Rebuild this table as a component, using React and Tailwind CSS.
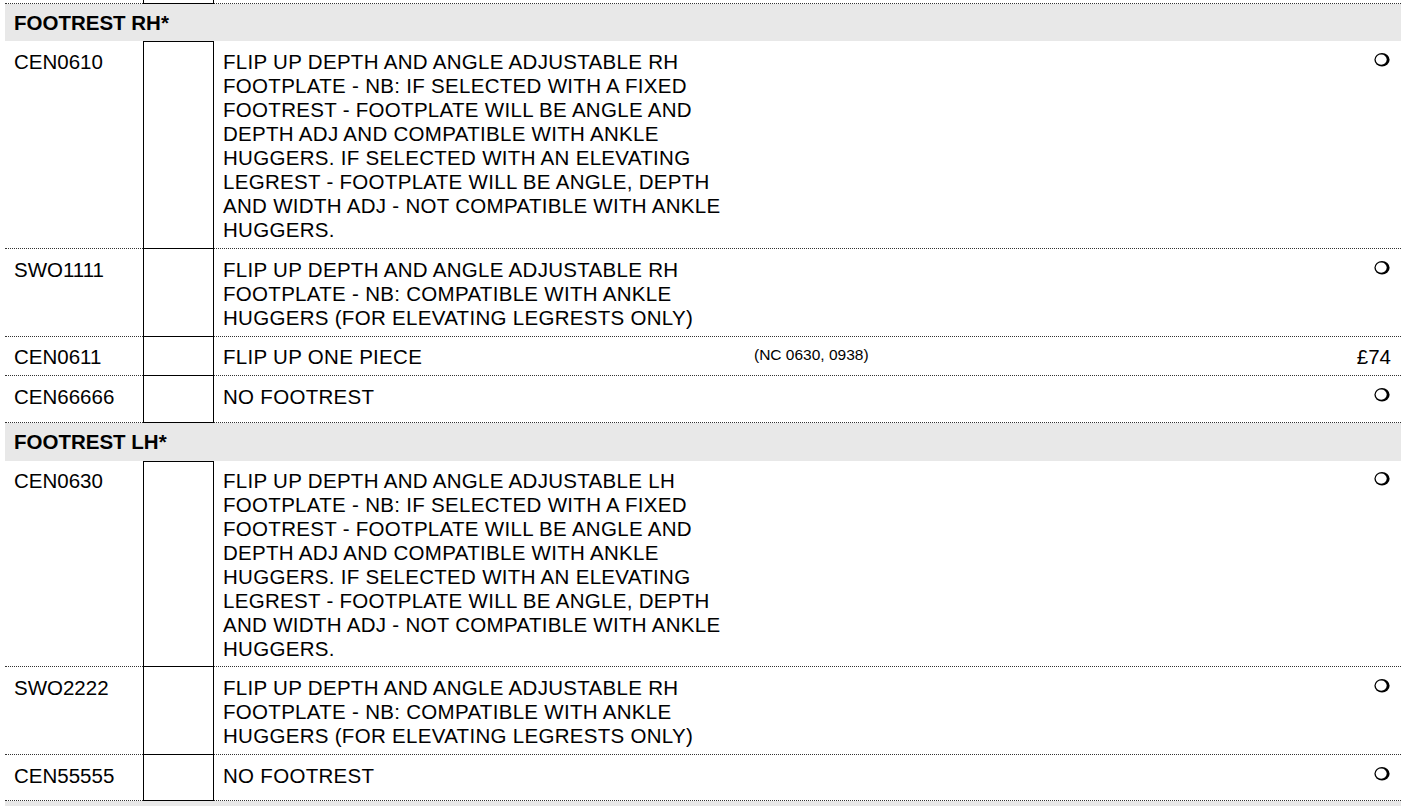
import React from "react";

const font = { fontFamily: '"Liberation Sans", Arial, sans-serif' };

// pastille ombrée (❍)
function Bullet() {
  return (
    <svg width="18" height="16" viewBox="0 0 18 16" className="block">
      <ellipse cx="9" cy="7.8" rx="7.6" ry="6.8" fill="#000" />
      <ellipse cx="8.2" cy="7.6" rx="5.5" ry="5.1" fill="#fff" />
    </svg>
  );
}

const sections = [
  {
    title: "FOOTREST RH*",
    headH: "h-[37px]",
    rows: [
      {
        code: "CEN0610",
        h: "h-[208px]",
        pt: "pt-[9px]",
        desc: [
          "FLIP UP DEPTH AND ANGLE ADJUSTABLE RH",
          "FOOTPLATE - NB: IF SELECTED WITH A FIXED",
          "FOOTREST - FOOTPLATE WILL BE ANGLE AND",
          "DEPTH ADJ AND COMPATIBLE WITH ANKLE",
          "HUGGERS. IF SELECTED WITH AN ELEVATING",
          "LEGREST - FOOTPLATE WILL BE ANGLE, DEPTH",
          "AND WIDTH ADJ - NOT COMPATIBLE WITH ANKLE",
          "HUGGERS.",
        ],
      },
      {
        code: "SWO1111",
        h: "h-[88px]",
        pt: "pt-[9px]",
        desc: [
          "FLIP UP DEPTH AND ANGLE ADJUSTABLE RH",
          "FOOTPLATE - NB: COMPATIBLE WITH ANKLE",
          "HUGGERS (FOR ELEVATING LEGRESTS ONLY)",
        ],
      },
      {
        code: "CEN0611",
        h: "h-[39px]",
        pt: "pt-[8px]",
        desc: ["FLIP UP ONE PIECE"],
        note: "(NC 0630, 0938)",
        price: "£74",
      },
      {
        code: "CEN66666",
        h: "h-[47px]",
        pt: "pt-[9px]",
        desc: ["NO FOOTREST"],
      },
    ],
  },
  {
    title: "FOOTREST LH*",
    headH: "h-[38px]",
    rows: [
      {
        code: "CEN0630",
        h: "h-[206px]",
        pt: "pt-[8px]",
        desc: [
          "FLIP UP DEPTH AND ANGLE ADJUSTABLE LH",
          "FOOTPLATE - NB: IF SELECTED WITH A FIXED",
          "FOOTREST - FOOTPLATE WILL BE ANGLE AND",
          "DEPTH ADJ AND COMPATIBLE WITH ANKLE",
          "HUGGERS. IF SELECTED WITH AN ELEVATING",
          "LEGREST - FOOTPLATE WILL BE ANGLE, DEPTH",
          "AND WIDTH ADJ - NOT COMPATIBLE WITH ANKLE",
          "HUGGERS.",
        ],
      },
      {
        code: "SWO2222",
        h: "h-[88px]",
        pt: "pt-[9px]",
        desc: [
          "FLIP UP DEPTH AND ANGLE ADJUSTABLE RH",
          "FOOTPLATE - NB: COMPATIBLE WITH ANKLE",
          "HUGGERS (FOR ELEVATING LEGRESTS ONLY)",
        ],
      },
      {
        code: "CEN55555",
        h: "h-[46px]",
        pt: "pt-[9px]",
        desc: ["NO FOOTREST"],
      },
    ],
  },
];

function Row({ row, first }) {
  return (
    <div className={`flex ${row.h}`}>
      <div className={`w-[138px] shrink-0 border-b border-dotted border-[#333] pl-[9px] ${row.pt}`}>
        {row.code}
      </div>
      <div
        className={`w-[71px] shrink-0 border-x-[1.5px] border-b-[1.5px] border-black ${
          first ? "border-t-[1.5px]" : ""
        }`}
      />
      <div className={`flex flex-1 border-b border-dotted border-[#333] pl-[9px] pr-[10px] ${row.pt}`}>
        <div className="w-[522px] shrink-0 tracking-[0.3px]">
          {row.desc.map((l, i) => (
            <div key={i}>{l}</div>
          ))}
        </div>
        <div className="flex-1 pl-[9px] text-[15.5px] leading-[20px]">{row.note}</div>
        <div className="flex justify-end">
          {row.price ? <span>{row.price}</span> : <div className="pt-[2px]"><Bullet /></div>}
        </div>
      </div>
    </div>
  );
}

export default function App() {
  return (
    <div className="min-h-screen bg-white px-[5px] text-[20.5px] leading-[24px] text-black" style={font}>
      {/* ligne précédente coupée */}
      <div className="flex h-[4px]">
        <div className="w-[138px] border-b border-dotted border-[#333]" />
        <div className="w-[71px] border-x-[1.5px] border-b-[1.5px] border-black" />
        <div className="flex-1 border-b border-dotted border-[#333]" />
      </div>

      {sections.map((s) => (
        <div key={s.title}>
          <div className={`flex items-center bg-[#e8e8e8] pl-[9px] text-[20.5px] font-bold ${s.headH}`}>
            {s.title}
          </div>
          {s.rows.map((r, i) => (
            <Row key={r.code} row={r} first={i === 0} />
          ))}
        </div>
      ))}

      <div className="h-[37px] bg-[#e8e8e8]" />
    </div>
  );
}
